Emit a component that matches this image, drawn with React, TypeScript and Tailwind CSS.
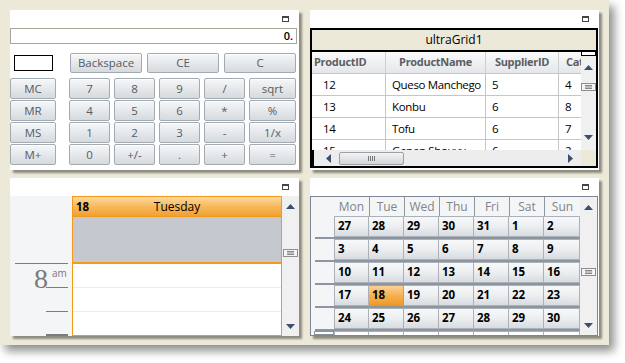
import React from "react";

const UpArrow = () => (
  <svg width="9" height="5" viewBox="0 0 9 5"><polygon points="0,5 9,5 4.5,0" fill="#3e4e6d" /></svg>
);
const DownArrow = () => (
  <svg width="9" height="5" viewBox="0 0 9 5"><polygon points="0,0 9,0 4.5,5" fill="#3e4e6d" /></svg>
);
const LeftArrow = () => (
  <svg width="5" height="9" viewBox="0 0 5 9"><polygon points="5,0 5,9 0,4.5" fill="#3e4e6d" /></svg>
);
const RightArrow = () => (
  <svg width="5" height="9" viewBox="0 0 5 9"><polygon points="0,0 0,9 5,4.5" fill="#3e4e6d" /></svg>
);
const Grip = () => (
  <svg width="15" height="8" viewBox="0 0 15 8">
    <rect x="0.5" y="0.5" width="14" height="7" fill="#f4f4f4" stroke="#8e8e8e" />
    <line x1="4" y1="2.5" x2="11" y2="2.5" stroke="#888" />
    <line x1="4" y1="4" x2="11" y2="4" stroke="#888" />
    <line x1="4" y1="5.5" x2="11" y2="5.5" stroke="#888" />
  </svg>
);

const TitleBar = () => (
  <div className="h-[18px] flex items-center justify-end pr-[10px] shrink-0">
    <div className="w-[7px] h-[6px] border border-[#444] border-t-2" />
  </div>
);

const Btn = ({ label, w, h = 21 }: { label: string; w: number; h?: number }) => (
  <div
    style={{ width: w, height: h }}
    className="shrink-0 rounded-[2px] border border-[#a3abb2] bg-gradient-to-b from-[#f5f7f8] via-[#e6e9ec] to-[#d6dadd] flex items-center justify-center text-[11.5px] text-[#555b61] shadow-[inset_0_1px_0_#ffffff]"
  >
    {label}
  </div>
);

const Calculator = () => {
  const rows = [
    ["MC", "7", "8", "9", "/", "sqrt"],
    ["MR", "4", "5", "6", "*", "%"],
    ["MS", "1", "2", "3", "-", "1/x"],
    ["M+", "0", "+/-", ".", "+", "="],
  ];
  return (
    <div className="bg-white shadow-[3px_3px_2px_rgba(0,0,0,0.4)] flex flex-col h-[160px]">
      <TitleBar />
      <div className="mr-[2px] h-[16px] border border-[#a8a696] flex items-center justify-end pr-[3px] text-[11px] font-semibold text-black">
        0.
      </div>
      <div className="flex items-center mt-[9px]">
        <div className="ml-[4px] w-[39px] h-[16px] border border-black" />
        <div className="ml-[17px] flex gap-[5px]">
          <Btn label="Backspace" w={72} h={20} />
          <Btn label="CE" w={72} h={20} />
          <Btn label="C" w={72} h={20} />
        </div>
      </div>
      <div className="flex flex-col gap-[1px] mt-[5px]">
        {rows.map((r) => (
          <div key={r[0]} className="flex">
            <Btn label={r[0]} w={46} />
            <div className="ml-[13px] flex gap-[4px]">
              {r.slice(1).map((l, i) => (
                <Btn key={l} label={l} w={i === 4 ? 47 : 41} />
              ))}
            </div>
          </div>
        ))}
      </div>
    </div>
  );
};

const Grid = () => {
  const cols = [
    { name: "ProductID", w: 74 },
    { name: "ProductName", w: 100 },
    { name: "SupplierID", w: 73 },
    { name: "Cat", w: 30 },
  ];
  const data = [
    ["12", "Queso Manchego", "5", "4"],
    ["13", "Konbu", "6", "8"],
    ["14", "Tofu", "6", "7"],
    ["15", "Genen Shouyu", "6", "2"],
  ];
  return (
    <div className="bg-white shadow-[3px_3px_2px_rgba(0,0,0,0.4)] flex flex-col h-[160px]">
      <TitleBar />
      <div className="mr-[1px] h-[140px] border-2 border-black flex flex-col overflow-hidden bg-[#ece9d8]">
        <div className="h-[22px] shrink-0 flex items-center justify-center text-[12px] text-black border-b-2 border-black">
          ultraGrid1
        </div>
        <div className="flex flex-1 min-h-0">
          <div className="flex flex-col w-[269px] overflow-hidden bg-white">
            <div className="h-[98px] overflow-hidden">
              <div className="flex h-[22px] border-b border-[#c6c6c6] bg-gradient-to-b from-[#fbfbfc] to-[#e4e6e9]">
                {cols.map((c, i) => (
                  <div
                    key={c.name}
                    style={{ width: c.w }}
                    className={`shrink-0 border-r border-[#cfcfcf] flex items-center text-[11px] tracking-[-0.3px] font-bold text-[#5b5e63] whitespace-nowrap overflow-hidden ${i === 0 ? "pl-[2px]" : i === 3 ? "pl-[7px]" : "justify-center"}`}
                  >
                    {c.name}
                  </div>
                ))}
              </div>
              {data.map((row) => (
                <div key={row[0]} className="flex h-[22px] border-b border-[#c6c6c6]">
                  {row.map((v, i) => (
                    <div
                      key={i}
                      style={{ width: cols[i].w }}
                      className={`shrink-0 border-r border-[#c6c6c6] flex items-center text-[11.5px] tracking-[-0.35px] text-black whitespace-nowrap overflow-hidden ${i === 0 ? "pl-[8px] border-l-[3px] border-l-white" : "pl-[6px]"}`}
                    >
                      {v}
                    </div>
                  ))}
                </div>
              ))}
            </div>
            <div className="h-[16px] bg-[#ededed] flex items-center border-l-2 border-black">
              <div className="ml-[12px]"><LeftArrow /></div>
              <div className="ml-[8px] w-[65px] h-[13px] rounded-[2px] border border-[#9aa0a6] bg-gradient-to-b from-[#f2f3f4] to-[#d3d6da] flex items-center justify-center">
                <div className="flex gap-[1px]">
                  <div className="w-[1px] h-[5px] bg-[#777]" />
                  <div className="w-[1px] h-[5px] bg-[#777]" />
                  <div className="w-[1px] h-[5px] bg-[#777]" />
                  <div className="w-[1px] h-[5px] bg-[#777]" />
                </div>
              </div>
              <div className="ml-auto mr-[8px]"><RightArrow /></div>
            </div>
          </div>
          <div className="flex-1 flex flex-col">
            <div className="flex-1 bg-[#f0f0f0] flex flex-col items-center border-t-[4px] border-t-white relative">
              <div className="absolute -top-[5px] left-0 right-0 h-[5px] border border-black bg-white" />
              <div className="mt-[9px]"><UpArrow /></div>
              <div className="mt-[13px]"><Grip /></div>
              <div className="mt-auto mb-[10px]"><DownArrow /></div>
            </div>
            <div className="h-[16px] bg-[#ece9d8]" />
          </div>
        </div>
      </div>
    </div>
  );
};

const Scheduler = () => (
  <div className="bg-white shadow-[3px_3px_2px_rgba(0,0,0,0.4)] flex flex-col h-[158px]">
    <TitleBar />
    <div className="flex flex-1 min-h-0">
      <div className="w-[62px] bg-[#f4f5f7] relative">
        <div className="absolute left-[5px] right-[4px] top-[67px] h-[1px] bg-[#7d7d7d]" />
        <div className="absolute left-[24px] top-[69px] text-[28px] leading-none text-[#7a7a7a] font-['Liberation_Serif',serif]">8</div>
        <div className="absolute left-[42px] top-[72px] text-[10px] leading-none text-[#777]">am</div>
        <div className="absolute left-[36px] right-[4px] top-[91px] h-[1px] bg-[#7d7d7d]" />
        <div className="absolute left-[36px] right-[4px] top-[115px] h-[1px] bg-[#7d7d7d]" />
        <div className="absolute left-[36px] right-[4px] top-[138px] h-[2px] bg-[#7d7d7d]" />
      </div>
      <div className="w-[210px] border border-[#f39a1a] flex flex-col">
        <div className="h-[19px] bg-gradient-to-b from-[#fcd89c] via-[#f7b95a] to-[#f0a030] flex items-center relative">
          <span className="ml-[3px] text-[11.5px] font-bold text-black">18</span>
          <span className="absolute left-0 right-0 text-center text-[12px] text-black">Tuesday</span>
        </div>
        <div className="h-[46px] bg-[#c5c8cf] border-t border-[#f39a1a]" />
        <div className="h-[2px] bg-[#f39a1a]" />
        <div className="h-[24px] border-b border-[#ececec]" />
        <div className="h-[24px] border-b border-[#ececec]" />
        <div className="flex-1" />
      </div>
      <div className="flex-1 bg-[#f0f0f0] flex flex-col items-center">
        <div className="mt-[8px]"><UpArrow /></div>
        <div className="mt-[40px]"><Grip /></div>
        <div className="mt-auto mb-[7px]"><DownArrow /></div>
      </div>
    </div>
  </div>
);

const Month = () => {
  const days = ["Mon", "Tue", "Wed", "Thu", "Fri", "Sat", "Sun"];
  const weeks = [
    ["27", "28", "29", "30", "31", "1", "2"],
    ["3", "4", "5", "6", "7", "8", "9"],
    ["10", "11", "12", "13", "14", "15", "16"],
    ["17", "18", "19", "20", "21", "22", "23"],
    ["24", "25", "26", "27", "28", "29", "30"],
  ];
  const widths = [35, 35, 35, 35, 35, 35, 36];
  return (
    <div className="bg-white shadow-[3px_3px_2px_rgba(0,0,0,0.4)] flex flex-col h-[158px]">
      <TitleBar />
      <div className="mr-[1px] flex-1 border border-[#7c8793] flex overflow-hidden">
        <div className="w-[269px] flex flex-col bg-[#f4f5f7] overflow-hidden">
          <div className="flex h-[19px] shrink-0">
            <div className="w-[23px] shrink-0" />
            {days.map((d, i) => (
              <div
                key={d}
                style={{ width: widths[i] }}
                className={`shrink-0 flex items-center justify-center text-[12px] text-[#808488] ${i > 0 ? "border-l border-[#8f979f]" : ""}`}
              >
                {d}
              </div>
            ))}
          </div>
          {[...weeks, ["", "", "", "", "", "", ""]].map((w, wi) => (
            <div key={wi} className="shrink-0">
              <div className="flex h-[21px]">
                <div className="w-[23px] shrink-0 relative">
                  {wi === 5 && <div className="absolute left-[3px] top-[0px] w-[20px] h-[4px] border border-[#8a929a] bg-white" />}
                </div>
                {w.map((n, i) => {
                  const sel = wi === 3 && i === 1;
                  return (
                    <div
                      key={i}
                      style={{ width: widths[i] }}
                      className={`shrink-0 border-r border-b border-t text-[11.5px] font-bold text-black pl-[3px] leading-[18px] ${i === 0 ? "border-l" : ""} ${
                        sel
                          ? "border-[#f0960f] bg-gradient-to-b from-[#fcd093] via-[#f6b050] to-[#f09a20]"
                          : wi === 5
                          ? "border-[#aab1b8] bg-white"
                          : "border-[#aab1b8] bg-gradient-to-b from-[#f7f8f9] via-[#eceef0] to-[#d8dce0]"
                      }`}
                    >
                      {n}
                    </div>
                  );
                })}
              </div>
              {wi < 5 && <div className="ml-[4px] h-[2px] bg-[#8d96a0]" />}
            </div>
          ))}
        </div>
        <div className="flex-1 bg-[#f0f0f0] flex flex-col items-center">
          <div className="mt-[8px]"><UpArrow /></div>
          <div className="mt-[58px]"><Grip /></div>
          <div className="mt-auto mb-[7px]"><DownArrow /></div>
        </div>
      </div>
    </div>
  );
};

export default function App() {
  return (
    <div className="w-[625px] h-[363px] bg-white font-['Open_Sans','Noto_Sans',sans-serif]">
      <div className="w-[609px] h-[345px] bg-[#ece9d8] shadow-[5px_6px_9px_rgba(0,0,0,0.45)] pt-[10px] pl-[10px] grid grid-cols-[289px_289px] grid-rows-[160px_158px] gap-x-[11px] gap-y-[8px]">
        <Calculator />
        <Grid />
        <Scheduler />
        <Month />
      </div>
    </div>
  );
}
